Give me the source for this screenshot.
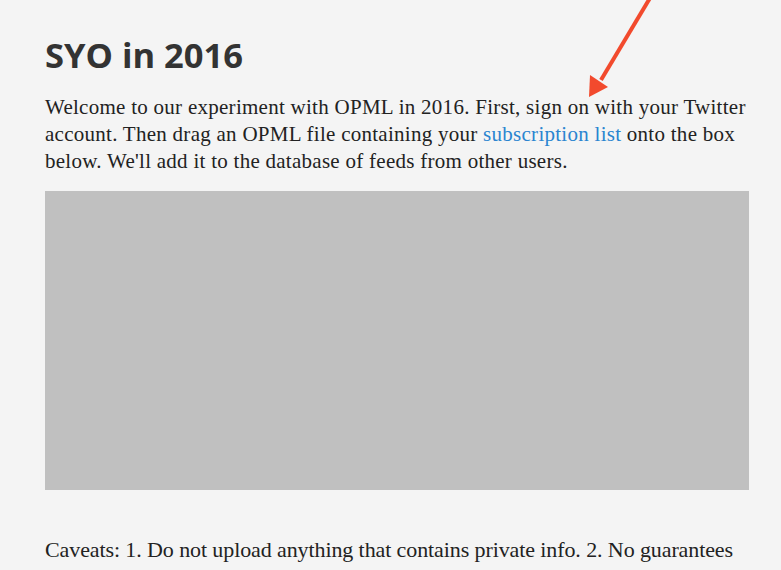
import React from "react";

export default function App() {
  return (
    <div className="relative min-h-[570px] w-full overflow-hidden bg-[#f4f4f4]">
      <div className="ml-[45px] w-[704px] pt-[33px]">
        <h1
          className="text-[34.5px] leading-[44px] font-bold text-[#333333]"
          style={{ fontFamily: '"Open Sans", "Noto Sans", sans-serif' }}
        >
          SYO in 2016
        </h1>
        <p
          className="mt-[17px] text-[21px] leading-[27px] tracking-[0.27px] text-[#222222] whitespace-nowrap"
          style={{ fontFamily: '"Liberation Serif", serif' }}
        >
          Welcome to our experiment with OPML in 2016. First, sign on with your Twitter
          <br />
          account. Then drag an OPML file containing your{" "}
          <a href="#" className="text-[#2a85d0]">subscription list</a> onto the box
          <br />
          below. We'll add it to the database of feeds from other users.
        </p>
        <div className="mt-[16px] h-[299px] w-[704px] bg-[#c0c0c0]" />
        <p
          className="mt-[46px] text-[22px] leading-[28px] tracking-[-0.1px] text-[#222222] whitespace-nowrap"
          style={{ fontFamily: '"Liberation Serif", serif' }}
        >
          Caveats: 1. Do not upload anything that contains private info. 2. No guarantees
          <br />
          that anything will come of it or what we'll do with it. This is a learning experiment.
        </p>
      </div>
      <svg
        className="absolute left-0 top-0"
        width="781"
        height="570"
        viewBox="0 0 781 570"
      >
        <line x1="650" y1="-2" x2="601" y2="80" stroke="#f24a2d" strokeWidth="4" />
        <polygon points="589,97 590,75 608,87" fill="#f24a2d" />
      </svg>
    </div>
  );
}
